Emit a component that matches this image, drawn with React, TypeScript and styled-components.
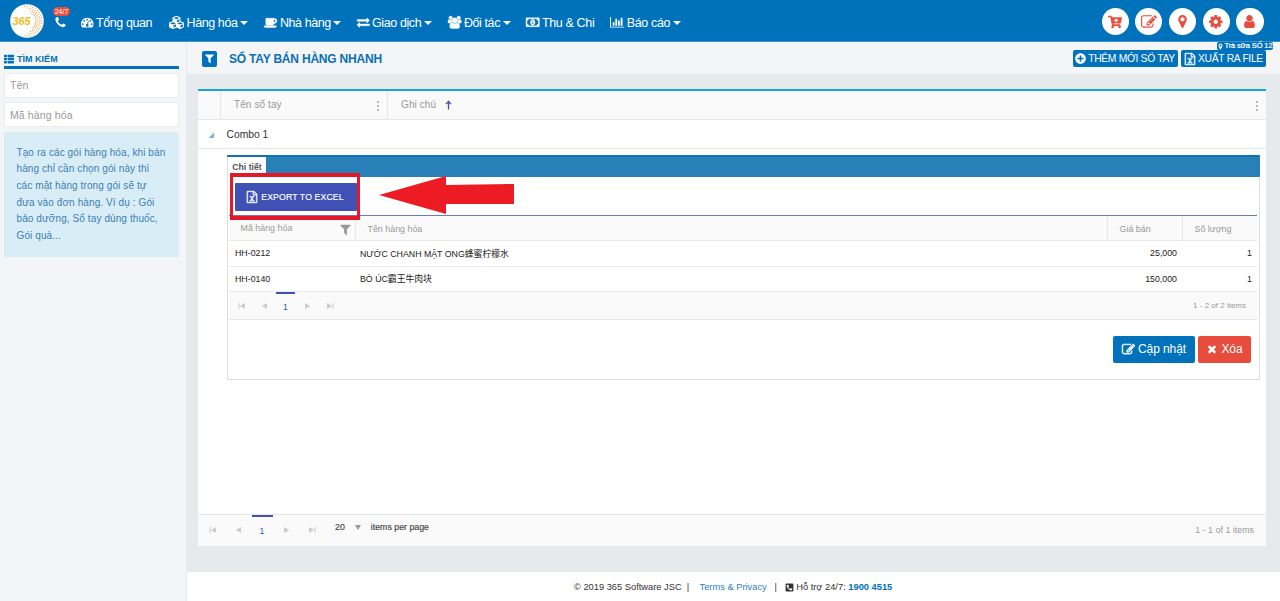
import React from "react";
import styled, { createGlobalStyle, css } from "styled-components";
import {
  FaCubes,
  FaThList,
  FaPlusCircle,
  FaCartPlus,
  FaPhoneSquareAlt,
} from "react-icons/fa";

const blue = "#0072bc";
const red = "#e74c3c";

const Global = createGlobalStyle`
  *, *::before, *::after { box-sizing: border-box; }
  body {
    margin: 0;
    background: #e7eaec;
    font-family: "Liberation Sans", Arial, "Noto Sans CJK SC", sans-serif;
    font-size: 10px;
    color: #333;
    overflow: hidden;
  }
  button, input { font-family: inherit; margin: 0; }
  svg { display: block; flex: none; }
`;

const paths: Record<string, [number, string]> = {
  phone: [1792, "M1600 1240q0 27-10 70.5t-21 68.5q-21 50-122 106-94 51-186 51-27 0-53-3.5t-57.5-12.5-47-14.5-55.5-20.5-49-18q-98-35-175-83-127-79-264-216t-216-264q-48-77-83-175-3-9-18-49t-20.5-55.5-14.5-47-12.5-57.5-3.5-53q0-92 51-186 56-101 106-122 25-11 68.5-21t70.5-10q14 0 21 3 18 6 53 76 11 19 30 54t35 63.5 31 53.5q3 4 17.5 25t21.5 35.5 7 28.5q0 20-28.5 50t-62 55-62 53-28.5 46q0 9 5 22.5t8.5 20.5 14 24 11.5 19q76 137 174 235t235 174q2 1 19 11.5t24 14 20.5 8.5 22.5 5q18 0 46-28.5t53-62 55-62 50-28.5q14 0 28.5 7t35.5 21.5 25 17.5q25 15 53.5 31t63.5 35 54 30q70 35 76 53 3 7 3 21z"],
  gauge: [1792, "M384 1152q0-53-37.5-90.5t-90.5-37.5-90.5 37.5-37.5 90.5 37.5 90.5 90.5 37.5 90.5-37.5 37.5-90.5zm192-448q0-53-37.5-90.5t-90.5-37.5-90.5 37.5-37.5 90.5 37.5 90.5 90.5 37.5 90.5-37.5 37.5-90.5zm428 481l101-382q6-26-7.5-48.5t-38.5-29.5-48 6.5-30 39.5l-101 382q-60 5-107 43.5t-63 98.5q-20 77 20 146t117 89 146-20 89-117q16-60-6-117t-72-91zm660-33q0-53-37.5-90.5t-90.5-37.5-90.5 37.5-37.5 90.5 37.5 90.5 90.5 37.5 90.5-37.5 37.5-90.5zm-640-640q0-53-37.5-90.5t-90.5-37.5-90.5 37.5-37.5 90.5 37.5 90.5 90.5 37.5 90.5-37.5 37.5-90.5zm448 192q0-53-37.5-90.5t-90.5-37.5-90.5 37.5-37.5 90.5 37.5 90.5 90.5 37.5 90.5-37.5 37.5-90.5zm320 448q0 261-141 483-19 29-54 29h-1402q-35 0-54-29-141-221-141-483 0-182 71-348t191-286 286-191 348-71 348 71 286 191 191 286 71 348z"],
  coffee: [1920, "M1664 704q0-80-56-136t-136-56h-64v384h64q80 0 136-56t56-136zm-1664 704h1792q0 106-75 181t-181 75h-1280q-106 0-181-75t-75-181zm1856-704q0 159-112.5 271.5t-271.5 112.5h-64v32q0 92-66 158t-158 66h-704q-92 0-158-66t-66-158v-736q0-26 19-45t45-19h1152q159 0 271.5 112.5t112.5 271.5z"],
  exchange: [1792, "M1792 1184v192q0 13-9.5 22.5t-22.5 9.5h-1376v192q0 13-9.5 22.5t-22.5 9.5q-12 0-24-10l-319-320q-9-9-9-22 0-14 9-23l320-320q9-9 23-9 13 0 22.5 9.5t9.5 22.5v192h1376q13 0 22.5 9.5t9.5 22.5zm0-544q0 14-9 23l-320 320q-9 9-23 9-13 0-22.5-9.5t-9.5-22.5v-192h-1376q-13 0-22.5-9.5t-9.5-22.5v-192q0-13 9.5-22.5t22.5-9.5h1376v-192q0-14 9-23t23-9q12 0 24 10l319 319q9 9 9 23z"],
  users: [1920, "M593 896q-162 5-265 128h-134q-82 0-138-40.5t-56-118.5q0-353 124-353 6 0 43.5 21t97.5 42.5 119 21.5q67 0 133-23-5 37-5 66 0 139 81 256zm1071 637q0 120-73 189.5t-194 69.5h-874q-121 0-194-69.5t-73-189.5q0-53 3.5-103.5t14-109 26.5-108.5 43-97.5 62-81 85.5-53.5 111.5-20q10 0 43 21.5t73 48 107 48 135 21.5 135-21.5 107-48 73-48 43-21.5q61 0 111.5 20t85.5 53.5 62 81 43 97.5 26.5 108.5 14 109 3.5 103.5zm-1024-1277q0 106-75 181t-181 75-181-75-75-181 75-181 181-75 181 75 75 181zm704 384q0 159-112.5 271.5t-271.5 112.5-271.5-112.5-112.5-271.5 112.5-271.5 271.5-112.5 271.5 112.5 112.5 271.5zm576 225q0 78-56 118.5t-138 40.5h-134q-103-123-265-128 81-117 81-256 0-29-5-66 66 23 133 23 59 0 119-21.5t97.5-42.5 43.5-21q124 0 124 353zm-128-609q0 106-75 181t-181 75-181-75-75-181 75-181 181-75 181 75 75 181z"],
  money: [1920, "M768 1152h384v-96h-128v-448h-114l-148 137 77 80q42-37 55-57h2v288h-128v96zm512-256q0 70-21 142t-59.5 134-101.5 101-138 39-138-39-101.5-101-59.5-134-21-142 21-142 59.5-134 101.5-101 138-39 138 39 101.5 101 59.5 134 21 142zm512 256v-512q-106 0-181-75t-75-181h-1152q0 106-75 181t-181 75v512q106 0 181 75t75 181h1152q0-106 75-181t181-75zm128-832v1152q0 26-19 45t-45 19h-1792q-26 0-45-19t-19-45v-1152q0-26 19-45t45-19h1792q26 0 45 19t19 45z"],
  chart: [2048, "M640 896v512h-256v-512h256zm384-512v1024h-256v-1024h256zm1024 1152v128h-2048v-1536h128v1408h1920zm-640-896v768h-256v-768h256zm384-384v1152h-256v-1152h256z"],
  marker: [1792, "M1152 640q0-106-75-181t-181-75-181 75-75 181 75 181 181 75 181-75 75-181zm256 0q0 109-33 179l-364 774q-16 33-47.5 52t-67.5 19-67.5-19-46.5-52l-365-774q-33-70-33-179 0-212 150-362t362-150 362 150 150 362z"],
  cog: [1792, "M1152 896q0-106-75-181t-181-75-181 75-75 181 75 181 181 75 181-75 75-181zm512-109v222q0 12-8 23t-20 13l-185 28q-19 54-39 91 35 50 107 138 10 12 10 25t-9 23q-27 37-99 108t-94 71q-12 0-26-9l-138-108q-44 23-91 38-16 136-29 186-7 28-36 28h-222q-14 0-24.5-8.5t-11.5-21.5l-28-184q-49-16-90-37l-141 107q-10 9-25 9-14 0-25-11-126-114-165-168-7-10-7-23 0-12 8-23 15-21 51-66.5t54-70.5q-27-50-41-99l-183-27q-13-2-21-12.5t-8-23.5v-222q0-12 8-23t19-13l186-28q14-46 39-92-40-57-107-138-10-12-10-24 0-10 9-23 26-36 98.5-107.5t94.5-71.5q13 0 26 10l138 107q44-23 91-38 16-136 29-186 7-28 36-28h222q14 0 24.5 8.5t11.5 21.5l28 184q49 16 90 37l142-107q9-9 24-9 13 0 25 10 129 119 165 170 7 8 7 22 0 12-8 23-15 21-51 66.5t-54 70.5q26 50 41 98l183 28q13 2 21 12.5t8 23.5z"],
  user: [1792, "M1536 1399q0 109-62.5 187t-150.5 78h-854q-88 0-150.5-78t-62.5-187q0-85 8.5-160.5t31.5-152 58.5-131 94-89 134.5-34.5q131 128 313 128t313-128q76 0 134.5 34.5t94 89 58.5 131 31.5 152 8.5 160.5zm-256-887q0 159-112.5 271.5t-271.5 112.5-271.5-112.5-112.5-271.5 112.5-271.5 271.5-112.5 271.5 112.5 112.5 271.5z"],
  edit: [1792, "M888 1184l116-116-152-152-116 116v56h96v96h56zm440-720q-16-16-33 1l-350 350q-17 17-1 33t33-1l350-350q17-17 1-33zm80 594v190q0 119-84.5 203.5t-203.5 84.5h-832q-119 0-203.5-84.5t-84.5-203.5v-832q0-119 84.5-203.5t203.5-84.5h832q63 0 117 25 15 7 18 23 3 17-9 29l-49 49q-14 14-32 8-23-6-45-6h-832q-66 0-113 47t-47 113v832q0 66 47 113t113 47h832q66 0 113-47t47-113v-126q0-13 9-22l64-64q15-15 35-7t20 29zm-96-738l288 288-672 672h-288v-288zm444 132l-92 92-288-288 92-92q28-28 68-28t68 28l152 152q28 28 28 68t-28 68z"],
  times: [1792, "M1490 1322q0 40-28 68l-136 136q-28 28-68 28t-68-28l-294-294-294 294q-28 28-68 28t-68-28l-136-136q-28-28-28-68t28-68l294-294-294-294q-28-28-28-68t28-68l136-136q28-28 68-28t68 28l294 294 294-294q28-28 68-28t68 28l136 136q28 28 28 68t-28 68l-294 294 294 294q28 28 28 68z"],
  filter: [1792, "M1595 295q17 41-14 70l-493 493v742q0 42-39 59-13 5-25 5-27 0-45-19l-256-256q-19-19-19-45v-486l-493-493q-31-29-14-70 17-39 59-39h1280q42 0 59 39z"],
  excel: [1792, "M1596 380q28 28 48 76t20 88v1152q0 40-28 68t-68 28h-1344q-40 0-68-28t-28-68v-1600q0-40 28-68t68-28h896q40 0 88 20t76 48zm-444-244v376h376q-10-29-22-41l-313-313q-12-12-41-22zm384 1528v-1024h-416q-40 0-68-28t-28-68v-416h-768v1536h1280zm-979-234v106h281v-106h-75l103-161q5-7 10-16.5t7.5-13.5 3.5-4h2q1 4 5 10 2 4 4.5 7.5t6 8 6.5 8.5l107 161h-76v106h291v-106h-68l-192-273 195-282h67v-107h-279v107h74l-103 159q-4 7-10 16.5t-9 13.5l-2 3h-2q-1-4-5-10-6-11-17-23l-106-159h76v-107h-290v107h68l189 272-194 283h-68z"],
};

function Icon({ name, size, bold }: { name: string; size: number; bold?: boolean }) {
  const [w, d] = paths[name];
  return (
    <svg
      width={(size * w) / 1792}
      height={size}
      viewBox={`0 0 ${w} 1792`}
      fill="currentColor"
      stroke={bold ? "currentColor" : "none"}
      strokeWidth={60}
      overflow="visible"
    >
      <path d={d} />
    </svg>
  );
}

const Page = styled.div`
  display: flex;
  flex-direction: column;
  width: 1280px;
  height: 601px;
`;

const TopBar = styled.header`
  display: flex;
  flex: none;
  height: 42px;
  padding-left: 10px;
  background: ${blue};
  border-bottom: 1px solid #3a93cd;
  color: #fff;
`;

const Logo = styled.div`
  padding-top: 4px;
  width: 34px;
`;

const Hotline = styled.a`
  position: relative;
  width: 37px;
  padding: 16px 0 0 10px;
`;

const HotBadge = styled.span`
  position: absolute;
  top: 7px;
  left: 9px;
  width: 17px;
  height: 9px;
  border-radius: 5px;
  background: ${red};
  font-size: 7px;
  line-height: 9px;
  text-align: center;
`;

const Nav = styled.nav`
  display: flex;
  flex: 1;
`;

const NavItem = styled.a<{ $w: number; $ls: number }>`
  display: flex;
  align-items: center;
  width: ${(p) => p.$w}px;
  flex: none;
  padding-top: 4px;
  font-size: 12.5px;
  letter-spacing: ${(p) => p.$ls}px;
  white-space: nowrap;
`;

const NavLabel = styled.span`
  margin-left: 2.5px;
`;

const Caret = styled.span`
  width: 0;
  height: 0;
  margin-left: 2.5px;
  border: 4px solid transparent;
  border-top: 4.4px solid currentColor;
  border-bottom: 0;
`;

const Rounds = styled.div`
  display: flex;
  gap: 6.5px;
  padding: 8px 16.5px 0 0;
`;

const Round = styled.button`
  display: flex;
  align-items: center;
  justify-content: center;
  width: 27.2px;
  height: 27.2px;
  padding: 0;
  border: 0;
  border-radius: 50%;
  background: #fff;
  color: ${red};
`;

const Body = styled.div`
  display: flex;
  flex: 1;
`;

const Sidebar = styled.aside`
  width: 187px;
  flex: none;
  padding: 10px 7px 0 4px;
  background: #f3f5f7;
  border-right: 1px solid #e7eaec;
`;

const SideTitle = styled.h2`
  display: flex;
  align-items: center;
  gap: 3px;
  width: 175px;
  height: 17px;
  margin: 0 0 3.5px;
  padding-top: 0;
  border-bottom: 3px solid ${blue};
  color: ${blue};
  font-size: 9px;
  letter-spacing: 0.02px;
`;

const SearchInput = styled.input`
  display: block;
  width: 175px;
  height: 25px;
  margin-bottom: 4.5px;
  padding: 0 5px;
  border: 1px solid #e9ecee;
  background: #fff;
  font-size: 10.5px;
  letter-spacing: 0.12px;
  &::placeholder { color: #999; opacity: 1; }
`;

const InfoBox = styled.p`
  width: 175px;
  height: 125px;
  margin: 0;
  padding: 13px 0 0 12.5px;
  background: #d9edf7;
  color: #3c80b4;
  font-size: 10px;
  line-height: 16.7px;
  letter-spacing: 0.1px;
  white-space: pre-line;
`;

const Main = styled.main`
  display: flex;
  flex-direction: column;
  flex: 1;
`;

const TitleBar = styled.div`
  position: relative;
  display: flex;
  align-items: center;
  height: 32px;
  padding: 2px 14px 0 15px;
  background: #f3f5f7;
  border-bottom: 1px solid #edf0f1;
`;

const FilterButton = styled.button`
  display: flex;
  align-items: center;
  justify-content: center;
  width: 15px;
  height: 16px;
  padding: 0;
  border: 0;
  border-radius: 2px;
  background: ${blue};
  color: #fff;
`;

const Title = styled.h1`
  flex: 1;
  margin: 0 0 0 12px;
  color: #0b6fb5;
  font-size: 12px;
  letter-spacing: -0.2px;
`;

const Action = styled.button<{ $w: number }>`
  display: flex;
  align-items: center;
  justify-content: center;
  gap: 2px;
  width: ${(p) => p.$w}px;
  height: 16.5px;
  margin-left: 3.5px;
  padding: 0;
  border: 0;
  border-radius: 2px;
  background: ${blue};
  color: #fff;
  font-size: 10.3px;
  letter-spacing: -0.3px;
  white-space: nowrap;
`;

const StoreTag = styled.div`
  position: absolute;
  top: 0;
  right: 7px;
  display: flex;
  align-items: center;
  justify-content: center;
  width: 56px;
  height: 8px;
  border-radius: 2px;
  background: ${blue};
  color: #fff;
  font-size: 7.5px;
  line-height: 8px;
  letter-spacing: -0.1px;
  -webkit-text-stroke: 0.2px #fff;
  white-space: nowrap;
`;

const Grid = styled.section`
  display: flex;
  flex-direction: column;
  width: 1068px;
  height: 457px;
  margin: 15px 0 0 11px;
  border-top: 2px solid #1ba4d3;
  background: #fff;
`;

const GridHead = styled.div`
  display: flex;
  height: 29px;
  border-bottom: 1px solid #e6e6e6;
  background: #fafafa;
  color: #999;
`;

const HeadCell = styled.div<{ $w?: number; $last?: boolean }>`
  display: flex;
  align-items: center;
  ${(p) => (p.$w ? css`width: ${p.$w}px;` : css`flex: 1;`)}
  padding: 0 8px 2px 13px;
  border-right: ${(p) => (p.$last ? 0 : "1px solid #e6e6e6")};
  letter-spacing: 0.1px;
`;

const SortArrow = styled.svg`
  margin: 2px 0 0 9px;
`;

const Dots = styled.span`
  display: flex;
  flex-direction: column;
  gap: 2px;
  margin: 4px 0 0 auto;
  &::before, &::after, i { content: ""; width: 2px; height: 2px; background: #b9b9b9; }
  i { display: block; }
`;

const MasterRow = styled.div`
  display: flex;
  align-items: center;
  height: 29px;
  padding-left: 11px;
  border-bottom: 1px solid #e6e6e6;
  font-size: 10.3px;
`;

const Expander = styled.span`
  width: 5px;
  height: 5px;
  margin: 2px 12.5px 0 0;
  background: linear-gradient(135deg, transparent 45%, #78b4dc 50%);
`;

const DetailArea = styled.div`
  flex: 1;
  padding: 6px 0 0 29px;
`;

const TabStrip = styled.div`
  height: 22px;
  width: 1033px;
  padding-top: 2px;
  border-radius: 1px;
  background: linear-gradient(#0f73b3 2px, #2980b9 2px);
`;

const Tab = styled.div`
  width: 39px;
  height: 20px;
  background: #fff;
  font-size: 8.7px;
  font-weight: bold;
  color: #555;
  line-height: 20px;
  text-align: center;
  border-left: 1px solid #ddd;
  letter-spacing: 0;
`;

const TabPanel = styled.div`
  position: relative;
  width: 1033px;
  height: 203px;
  padding: 0 2px 0 1px;
  border: 1px solid #dcdfe1;
  border-top: 0;
`;

const Toolbar = styled.div`
  height: 39px;
  padding: 6px 0 0 6px;
  border-bottom: 1px solid #7078bd;
`;

const ExportButton = styled.button`
  display: flex;
  align-items: center;
  justify-content: center;
  gap: 3px;
  width: 122px;
  height: 28px;
  padding: 0 2px 0 0;
  border: 0;
  border-radius: 1px;
  background: #3f51b5;
  color: #fff;
  font-size: 8.7px;
  letter-spacing: 0.14px;
  -webkit-text-stroke: 0.15px #fff;
`;

const RedFrame = styled.div`
  position: absolute;
  left: 2px;
  top: -4px;
  width: 130px;
  height: 47px;
  border: 4px solid #e5182a;
  border-width: 4px 3px;
`;

const RedArrow = styled.svg`
  position: absolute;
  left: 151px;
  top: -1px;
`;

const Row = styled.div<{ $head?: boolean }>`
  display: grid;
  grid-template-columns: 127px 752px 75px 75px;
  height: ${(p) => (p.$head ? 25 : 25.5)}px;
  border-bottom: 1px solid #e9e9e9;
  background: ${(p) => (p.$head ? "#fafafa" : "#fff")};
`;

const InnerHead = styled.div<{ $filter?: boolean; $last?: boolean }>`
  display: flex;
  align-items: center;
  justify-content: space-between;
  padding: ${(p) => (p.$filter ? 0 : 2)}px 3px 0 11.5px;
  border-right: ${(p) => (p.$last ? 0 : "1px solid #e6e6e6")};
  color: #999;
  font-size: 8.9px;
  svg { margin-top: 2px; }
`;

const Cell = styled.div<{ $right?: boolean; $first?: boolean }>`
  display: flex;
  align-items: center;
  justify-content: ${(p) => (p.$right ? "flex-end" : "flex-start")};
  padding: 0 6px 0 ${(p) => (p.$first ? 6 : 4)}px;
  font-size: 8.8px;
  color: #222;
  white-space: nowrap;
`;

const Pager = styled.div<{ $h: number; $outer?: boolean }>`
  display: flex;
  align-items: flex-start;
  height: ${(p) => p.$h}px;
  padding: 0 ${(p) => (p.$outer ? 12 : 11)}px 0 2px;
  border-top: ${(p) => (p.$outer ? "1px solid #e6e6e6" : 0)};
  border-bottom: ${(p) => (p.$outer ? 0 : "1px solid #e6e6e6")};
  background: #fafafa;
`;

const PageStep = styled.span<{ $w: number; $h: number }>`
  display: flex;
  align-items: center;
  justify-content: center;
  width: ${(p) => p.$w}px;
  height: ${(p) => p.$h}px;
  color: #ccc;
`;

const PageNumber = styled(PageStep)<{ $gap: number }>`
  margin: 0 ${(p) => p.$gap}px 0 ${(p) => p.$gap - 1}px;
  border-top: 2px solid #3f51b5;
  color: #3f51b5;
  font-size: 8.7px;
`;

const PageSize = styled.span`
  display: flex;
  align-items: center;
  height: 24px;
  margin-left: 10px;
  color: #444;
  font-size: 8.8px;
  -webkit-text-stroke: 0.15px #444;
`;

const SizeCaret = styled.i`
  margin: 1px 9.5px 0 10.5px;
  border: 3.3px solid transparent;
  border-top: 5px solid #999;
  border-bottom: 0;
`;

const Count = styled.span<{ $size: number; $h: number }>`
  margin-left: auto;
  height: ${(p) => p.$h}px;
  line-height: ${(p) => p.$h}px;
  color: #999;
  font-size: ${(p) => p.$size}px;
`;

const Buttons = styled.div`
  display: flex;
  justify-content: flex-end;
  gap: 3px;
  padding: 16px 6px 0 0;
`;

const BigButton = styled.button<{ $w: number; $bg: string }>`
  display: flex;
  align-items: center;
  justify-content: center;
  gap: 3px;
  width: ${(p) => p.$w}px;
  height: 27px;
  padding: 0 0 1px;
  border: 0;
  border-radius: 2px;
  background: ${(p) => p.$bg};
  color: #fff;
  font-size: 12px;
  letter-spacing: -0.1px;
  white-space: nowrap;
`;

const Footer = styled.footer`
  display: flex;
  align-items: center;
  height: 29px;
  margin-top: auto;
  padding: 1px 0 0 387px;
  background: #fff;
  font-size: 9.3px;
  white-space: pre;
  a { color: #2a7fbf; }
  b { color: ${blue}; }
`;

const nav = [
  { icon: <Icon name="gauge" size={12.5} />, label: "Tổng quan", w: 88, ls: -0.4 },
  { icon: <FaCubes size={15} />, label: "Hàng hóa", w: 95, ls: -0.4, menu: true },
  { icon: <Icon name="coffee" size={12.5} bold />, label: "Nhà hàng", w: 93, ls: -0.4, menu: true },
  { icon: <Icon name="exchange" size={12.5} bold />, label: "Giao dịch", w: 91, ls: -0.4, menu: true },
  { icon: <Icon name="users" size={12.5} bold />, label: "Đối tác", w: 78, ls: -0.4, menu: true },
  { icon: <Icon name="money" size={12.5} bold />, label: "Thu & Chi", w: 84, ls: -0.35 },
  { icon: <Icon name="chart" size={12.5} />, label: "Báo cáo", w: 80, ls: -0.35, menu: true },
];

const items = [
  { code: "HH-0212", name: "NƯỚC CHANH MẬT ONG蜂蜜柠檬水", price: "25,000", qty: "1" },
  { code: "HH-0140", name: "BÒ ÚC霸王牛肉块", price: "150,000", qty: "1" },
];

function LogoMark() {
  const dots = [];
  for (let ring = 0; ring < 4; ring++) {
    const r = 15 - ring * 2;
    for (let a = -100 + ring * 14; a <= 100 - ring * 14; a += 11) {
      const t = (a * Math.PI) / 180;
      dots.push(
        <circle key={`${ring}-${a}`} cx={17 + r * Math.cos(t)} cy={17 + r * Math.sin(t)} r={0.65} fill="#f0a45c" />
      );
    }
  }
  return (
    <svg width="34" height="34" viewBox="0 0 34 34">
      <circle cx="17" cy="17" r="16.8" fill="#fff" />
      {dots}
      <text x="2.5" y="20.8" fill="#f2b91d" fontSize="11" fontWeight="bold" fontStyle="italic" textLength="18">
        365
      </text>
    </svg>
  );
}

function Step({ flip, bar }: { flip?: boolean; bar?: boolean }) {
  return (
    <svg width="8" height="8" viewBox="0 0 8 8" fill="currentColor" transform={flip ? "scale(-1 1)" : undefined}>
      {bar && <rect x="0.5" y="0.8" width="1" height="6.4" />}
      <path d="M7 1v6L1.8 4z" />
    </svg>
  );
}

function Steps({ w, h, gap, numW }: { w: number; h: number; gap: number; numW: number }) {
  return (
    <>
      <PageStep $w={w} $h={h}><Step bar /></PageStep>
      <PageStep $w={w} $h={h}><Step /></PageStep>
      <PageNumber $w={numW} $h={h} $gap={gap}>1</PageNumber>
      <PageStep $w={w} $h={h}><Step flip /></PageStep>
      <PageStep $w={w} $h={h}><Step flip bar /></PageStep>
    </>
  );
}

export default function App() {
  return (
    <Page>
      <Global />
      <TopBar>
        <Logo><LogoMark /></Logo>
        <Hotline>
          <Icon name="phone" size={13} />
          <HotBadge>24/7</HotBadge>
        </Hotline>
        <Nav>
          {nav.map((n) => (
            <NavItem key={n.label} $w={n.w} $ls={n.ls}>
              {n.icon}
              <NavLabel>{n.label}</NavLabel>
              {n.menu && <Caret />}
            </NavItem>
          ))}
        </Nav>
        <Rounds>
          <Round><FaCartPlus size={14} /></Round>
          <Round><Icon name="edit" size={16} /></Round>
          <Round><Icon name="marker" size={15} /></Round>
          <Round><Icon name="cog" size={15.5} /></Round>
          <Round><Icon name="user" size={15} /></Round>
        </Rounds>
      </TopBar>
      <Body>
        <Sidebar>
          <SideTitle><FaThList size={10} />TÌM KIẾM</SideTitle>
          <SearchInput placeholder="Tên" />
          <SearchInput placeholder="Mã hàng hóa" />
          <InfoBox>
            {"Tạo ra các gói hàng hóa, khi bán\nhàng chỉ cần chọn gói này thì\ncác mặt hàng trong gói sẽ tự\nđưa vào đơn hàng. Ví dụ : Gói\nbảo dưỡng, Sổ tay dùng thuốc,\nGói quà..."}
          </InfoBox>
        </Sidebar>
        <Main>
          <TitleBar>
            <FilterButton><Icon name="filter" size={11} /></FilterButton>
            <Title>SỔ TAY BÁN HÀNG NHANH</Title>
            <Action $w={105}><FaPlusCircle size={11} />THÊM MỚI SỔ TAY</Action>
            <Action $w={85}><Icon name="excel" size={12} bold />XUẤT RA FILE</Action>
            <StoreTag><Icon name="marker" size={7} />Trà sữa SỐ 12</StoreTag>
          </TitleBar>
          <Grid>
            <GridHead>
              <HeadCell $w={23} />
              <HeadCell $w={167}>Tên sổ tay<Dots><i /></Dots></HeadCell>
              <HeadCell $last>
                Ghi chú
                <SortArrow width="7" height="10" viewBox="0 0 7 10" fill="none" stroke="#3f51b5" strokeWidth="1.3">
                  <path d="M3.5 9.5V1.5M1 4l2.500-2.600L6 4" />
                </SortArrow>
                <Dots><i /></Dots>
              </HeadCell>
            </GridHead>
            <MasterRow><Expander />Combo 1</MasterRow>
            <DetailArea>
              <TabStrip><Tab>Chi tiết</Tab></TabStrip>
              <TabPanel>
                <Toolbar>
                  <ExportButton><Icon name="excel" size={12} bold />EXPORT TO EXCEL</ExportButton>
                </Toolbar>
                <Row $head>
                  <InnerHead $filter>Mã hàng hóa<Icon name="filter" size={13} /></InnerHead>
                  <InnerHead>Tên hàng hóa</InnerHead>
                  <InnerHead>Giá bán</InnerHead>
                  <InnerHead $last>Số lượng</InnerHead>
                </Row>
                {items.map((it) => (
                  <Row key={it.code}>
                    <Cell $first>{it.code}</Cell>
                    <Cell>{it.name}</Cell>
                    <Cell $right>{it.price}</Cell>
                    <Cell $right>{it.qty}</Cell>
                  </Row>
                ))}
                <Pager $h={28}>
                  <Steps w={22} h={27} gap={2} numW={19} />
                  <Count $size={8} $h={28}>1 - 2 of 2 items</Count>
                </Pager>
                <Buttons>
                  <BigButton $w={82} $bg={blue}><Icon name="edit" size={13} bold />Cập nhật</BigButton>
                  <BigButton $w={53} $bg={red}><Icon name="times" size={12} />Xóa</BigButton>
                </Buttons>
                <RedFrame />
                <RedArrow width="136" height="39" viewBox="0 0 136 39" fill="#ed1c24">
                  <path d="M0 19L67 0v9l68-1v20H67v10z" />
                </RedArrow>
              </TabPanel>
            </DetailArea>
            <Pager $h={32} $outer>
              <Steps w={25.5} h={30} gap={1.5} numW={21} />
              <PageSize>20<SizeCaret />items per page</PageSize>
              <Count $size={8.9} $h={30}>1 - 1 of 1 items</Count>
            </Pager>
          </Grid>
          <Footer>
            {"© 2019 365 Software JSC  |    "}<a>Terms &amp; Privacy</a>{"   |   "}
            <FaPhoneSquareAlt size={9} />{" Hỗ trợ 24/7: "}<b>1900 4515</b>
          </Footer>
        </Main>
      </Body>
    </Page>
  );
}
